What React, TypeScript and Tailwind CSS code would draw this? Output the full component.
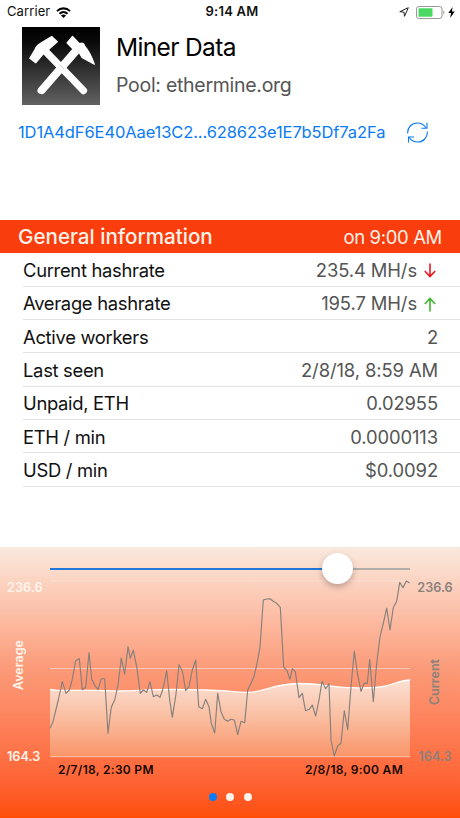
interface InfoRow {
  label: string;
  value: string;
  trend?: 'up' | 'down';
}

const rows: InfoRow[] = [
  { label: 'Current hashrate', value: '235.4 MH/s', trend: 'down' },
  { label: 'Average hashrate', value: '195.7 MH/s', trend: 'up' },
  { label: 'Active workers', value: '2' },
  { label: 'Last seen', value: '2/8/18, 8:59 AM' },
  { label: 'Unpaid, ETH', value: '0.02955' },
  { label: 'ETH / min', value: '0.0000113' },
  { label: 'USD / min', value: '$0.0092' },
];

// Current hashrate samples, x / y in chart units
const currentPoints = [
  '50,728.3 53,721.7 58.3,700 62.3,681.7 66,693.3 69.3,690 72.3,679.3 75.7,660.7 79.3,658.7 82.3,689.7',
  '85.7,687.3 89,652.7 91.7,679.3 94.7,685.3 98,689.7 101.3,678.7 104.7,678.7 108,733.3 111.3,707.3',
  '114.7,700 118,685 121.3,658 124.7,674.3 128,646.7 130.3,658.3 133.3,650.3 136.7,666.7 140.3,693.3',
  '143.3,690 146.7,692.3 150,681.7 153.3,696.7 156.7,695 160,697.3 162.7,690 166.7,670.7 169.7,700',
  '172.3,717.3 176,694 179,664.7 182.3,670.7 185.7,690.7 189,686.7 192.3,670 195.7,660 198.7,706.7',
  '202.3,708.7 205.7,699.3 209,706.7 211.3,723.3 214.7,733 217.7,693.3 221,711.7 224.3,719.3',
  '227.7,721.3 231,719.3 234.3,720 237.7,734.7 241,721.3 244.7,722.7 247.7,690 250,685.3 253.7,677.3',
  '256.7,665 260,647.3 263.3,600 266.7,599 270,598.7 273.3,601.3 276.7,603.3 280.3,607.3 283.7,667',
  '287,670.7 290,679.3 292.3,668.7 295.3,671.7 299,697.7 302.3,693.3 305.5,710.7 309.3,709.3 312.3,705',
  '315.7,716 319,700 322,681.3 325.7,688.7 329,683.7 331,740 334.3,756 337.7,746 341,743.3 344.3,710.7',
  '347.7,729.7 351,686.7 354.3,651.3 357.7,675 361,691.3 364.3,683.3 367.3,683.3 369.7,659.3',
  '373.3,701.7 376.7,663.3 380,636.7 383.3,623.3 386.7,608 390,630 393.3,607.7 396.7,601.3 399.7,582.3',
  '403,587.7 406.3,581 409.7,583',
].join(' ');

const averagePath =
  'M50,689.3 C53,689.6 54,690.3 58,690.3 L98,690.3 C108,690.5 112,691.2 120,691 C135,690.8 145,689.7 160,689.6 C180,689.3 195,689.8 205,690 C225,690.3 235,692.4 248,692.4 C265,692.4 272,684 298,683.5 C322,683.3 330,687.5 352,687.7 C366,688 374,688.6 386,686 C396,683.4 400,680.3 410,680';

function PoolLogo() {
  return (
    <svg viewBox="0 0 78 78" className="h-[78px] w-[78px] shrink-0">
      <defs>
        <linearGradient id="logo-bg" x1="0" y1="0" x2="0" y2="1">
          <stop offset="0" stopColor="#000" />
          <stop offset="0.2" stopColor="#0a0a0a" />
          <stop offset="1" stopColor="#626262" />
        </linearGradient>
      </defs>
      <rect width="78" height="78" fill="url(#logo-bg)" />
      <g fill="#fff" stroke="#fff" strokeWidth="1.2" strokeLinejoin="round">
        <path d="M21 26 L25.5 22 L64 61.8 C66 64.5 62.5 68 59.8 66.2 Z" />
        <path d="M51.5 21.5 L57 25.5 L22 65.5 C19.5 68.2 14.5 65.5 16.5 62 Z" />
        <path d="M29.7 9.5 L35.3 14.8 L26.5 22.5 L21.5 26.5 L13.7 35.8 L7.8 31.3 L13 22.5 C14 19.5 16 17.8 18.5 16.3 Z" />
        <path d="M50.5 9.5 L57.8 16.8 C59.5 15.5 62.5 16 62.5 19 C66.5 23.5 69.5 29 72.3 37.3 L60 30.5 L56.5 24.5 L51 22 L45 15.8 Z" />
      </g>
      <path d="M37.5 37.5 L42.5 42.5" stroke="#999" strokeWidth="0.5" />
    </svg>
  );
}

function StatusBar() {
  return (
    <div className="grid h-6 grid-cols-3 items-center pr-[5px] pl-[7px] text-[13px] text-[#111]">
      <div className="flex items-center gap-[6px]">
        <span className="tracking-[0.1px]">Carrier</span>
        <svg viewBox="0 0 16 12" className="h-[11px] w-[15px]" fill="none" stroke="#000" strokeWidth="2.2">
          <path d="M0.9 4.5 C5 0.5 11 0.5 15.1 4.5" />
          <path d="M3.6 7.3 C6.2 4.9 9.8 4.9 12.4 7.3" />
          <path d="M8 12 L5.3 9.3 C6.9 7.9 9.1 7.9 10.7 9.3 Z" fill="#000" stroke="none" />
        </svg>
      </div>
      <span className="pl-0.5 text-center font-semibold tracking-[0.2px]">9:14 AM</span>
      <div className="flex items-center justify-end">
        <svg viewBox="0 0 10 10" className="mr-[7px] h-[10px] w-[10px]" fill="none" stroke="#222" strokeLinejoin="round">
          <path d="M9.3 0.7 L0.8 4.7 L5 5.1 L5.5 9.3 Z" />
        </svg>
        <svg viewBox="0 0 29 13" className="mr-[3px] h-[13px] w-[29px]">
          <rect x="0.5" y="0.5" width="25.5" height="12" rx="2.5" fill="#fff" stroke="#999" />
          <rect x="2.5" y="2.3" width="14" height="8.4" rx="0.7" fill="#4bd964" />
          <path d="M27.3 4.5 C28.8 5 28.8 8 27.3 8.5 Z" fill="#999" />
        </svg>
        <svg viewBox="0 0 7 11" className="h-[11px] w-[7px]">
          <path d="M4.6 0 L0.3 6.1 L3 6.1 L2.2 11 L6.7 4.6 L3.9 4.6 Z" fill="#000" />
        </svg>
      </div>
    </div>
  );
}

function RefreshIcon() {
  return (
    <svg viewBox="0 0 21 21" className="h-[21px] w-[21px]" fill="none" stroke="#0a7bf5" strokeWidth="1.1">
      <path d="M0.7 11.5 C0.2 5.5 4.8 1 10.3 1 C14 1 17.3 3 19.2 6" />
      <path d="M20 0.8 L20 6.2 L14.5 6.2" />
      <path d="M20.3 9.5 C20.8 15.5 16.2 20 10.7 20 C7 20 3.7 18 1.8 15" />
      <path d="M1.5 20.5 L1.5 15 L7 15" />
    </svg>
  );
}

function TrendArrow({ trend }: { trend: 'up' | 'down' }) {
  return (
    <svg
      viewBox="0 0 12 15"
      className="mr-[2px] ml-[7px] h-[15px] w-3"
      fill="none"
      stroke={trend === 'up' ? '#3cb52a' : '#f0141e'}
      strokeWidth="1.6"
    >
      {trend === 'up' ? (
        <path d="M6 14.5 L6 1.5 M0.8 7 L6 1.5 L11.2 7" />
      ) : (
        <path d="M6 0.5 L6 13.5 M0.8 8 L6 13.5 L11.2 8" />
      )}
    </svg>
  );
}

function HashrateChart() {
  return (
    <svg viewBox="50 579 360 179" className="h-[179px] w-[360px]">
      <defs>
        <linearGradient id="average-fill" x1="0" y1="0" x2="0" y2="1">
          <stop offset="0" stopColor="#fbe0d4" />
          <stop offset="0.5" stopColor="#fabd9f" />
          <stop offset="1" stopColor="#fa9468" />
        </linearGradient>
      </defs>
      <path d={`${averagePath} L410,757 L50,757 Z`} fill="url(#average-fill)" />
      <g stroke="#fff" strokeOpacity="0.45">
        <path d="M50 581 H410" strokeOpacity="0.3" />
        <path d="M50 668.5 H410" />
        <path d="M50 756.7 H410" />
      </g>
      <path d={averagePath} fill="none" stroke="#fff" strokeWidth="1.3" />
      <polyline points={currentPoints} fill="none" stroke="#86807c" strokeWidth="1.15" strokeLinejoin="round" />
    </svg>
  );
}

export default function App() {
  return (
    <div className="flex h-[818px] w-[460px] flex-col overflow-hidden bg-white font-['Inter',sans-serif] whitespace-nowrap">
      <StatusBar />

      <header className="flex pt-[3px] pl-[22px]">
        <PoolLogo />
        <div className="pt-1 pl-4">
          <h1 className="text-[24.5px] leading-8 tracking-[-0.65px] text-black">Miner Data</h1>
          <p className="mt-2 text-[19.5px] leading-7 tracking-[-0.28px] text-[#555]">Pool: ethermine.org</p>
        </div>
      </header>

      <div className="mt-[14px] flex h-[26px] items-center pl-[18px] text-[#0a7bf5]">
        <span className="w-[389px] text-[16.5px] tracking-[-0.11px]">1D1A4dF6E40Aae13C2...628623e1E7b5Df7a2Fa</span>
        <RefreshIcon />
      </div>

      <section className="mt-[75px]">
        <div className="flex h-[33.3px] items-center justify-between bg-[#f93d0c] px-[18px] pt-[2px] text-[#fff2ea]">
          <h2 className="text-[20.6px] font-medium">General information</h2>
          <span className="text-[18.5px] tracking-[-0.35px]">on 9:00 AM</span>
        </div>
        <ul className="pl-[23px] text-[18.4px] tracking-[-0.3px]">
          {rows.map((row) => (
            <li
              key={row.label}
              className="flex h-[33.33px] items-center justify-between border-b border-[#e3e3e5] pt-[3px] pr-[22px] text-[#111]"
            >
              <span>{row.label}</span>
              <span className="flex items-center tracking-[-0.1px] text-[#555]">
                {row.value}
                {row.trend && <TrendArrow trend={row.trend} />}
              </span>
            </li>
          ))}
        </ul>
      </section>

      <section className="mt-auto h-[271px] bg-linear-to-b from-[#f9e9de] via-[#fb9a78] via-45% to-[#fe4d05]">
        <div className="flex h-8 items-end pl-[50px]">
          <div className="relative flex h-[20px] w-[360px] items-center">
            <div className="h-[2.5px] w-[286px] bg-[#1f78d8]" />
            <div className="h-[2.5px] flex-1 bg-[#b4aeab]" />
            <div className="absolute top-[-6px] left-[272px] h-[31px] w-[31px] rounded-full bg-white shadow-[0_3px_6px_rgba(0,0,0,0.25)]" />
          </div>
        </div>
        <div className="flex h-[186px]">
          <div className="flex w-[50px] flex-col justify-between pt-px pl-[7px] text-[12.7px] font-semibold text-[#fff5ee]">
            <span className="leading-4">236.6</span>
            <span className="mb-4 ml-0.5 rotate-180 self-start text-[12.5px] leading-5 [writing-mode:vertical-rl]">Average</span>
            <span className="leading-4">164.3</span>
          </div>
          <HashrateChart />
          <div className="flex w-[50px] flex-col items-center justify-between pt-px text-[12.7px] font-semibold text-[#8a817c]">
            <span className="leading-4">236.6</span>
            <span className="mt-5 rotate-180 text-[12.5px] leading-5 [writing-mode:vertical-rl]">Current</span>
            <span className="leading-4">164.3</span>
          </div>
        </div>
        <div className="-mt-[3px] flex justify-between pr-[57px] pl-[58px] text-[12px] leading-4 font-semibold tracking-[0.3px] text-[#160800]">
          <span>2/7/18, 2:30 PM</span>
          <span>2/8/18, 9:00 AM</span>
        </div>
        <div className="mt-[15px] flex justify-center gap-[9.5px]">
          <span className="h-[8px] w-[8px] rounded-full bg-[#0a7bf5]" />
          <span className="h-[8px] w-[8px] rounded-full bg-[#fff2ea]" />
          <span className="h-[8px] w-[8px] rounded-full bg-[#fff2ea]" />
        </div>
      </section>
    </div>
  );
}
